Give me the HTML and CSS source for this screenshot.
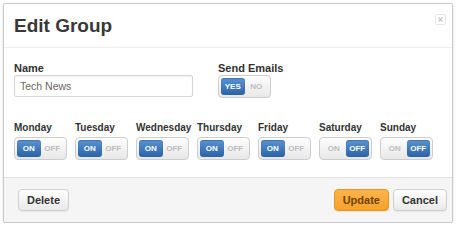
FILE: index.html
```html
<!DOCTYPE html>
<html lang="en">
<head>
  <meta charset="UTF-8">
  <title>Edit Group</title>
  <link rel="stylesheet" href="styles.css">
</head>
<body>
  <div class="modal">
    <div class="modal-header">
      <h2>Edit Group</h2>
      <span class="close">
        <svg width="11" height="11" viewBox="0 0 11 11">
          <rect x="0.5" y="0.5" width="10" height="10" rx="1.5" fill="none" stroke="#e6e6e6"/>
          <path d="M3.5 3.5 L7.5 7.5 M7.5 3.5 L3.5 7.5" stroke="#c4c4c4" stroke-width="1.2"/>
        </svg>
      </span>
    </div>

    <div class="modal-body">
      <div class="top-row">
        <div class="field name-field">
          <label>Name</label>
          <input type="text" class="text-input" value="Tech News">
        </div>
        <div class="field">
          <label>Send Emails</label>
          <div class="switch"><span class="active">YES</span><span>NO</span></div>
        </div>
      </div>

      <div class="days">
        <div class="day">
          <label>Monday</label>
          <div class="switch"><span class="active">ON</span><span>OFF</span></div>
        </div>
        <div class="day">
          <label>Tuesday</label>
          <div class="switch"><span class="active">ON</span><span>OFF</span></div>
        </div>
        <div class="day">
          <label>Wednesday</label>
          <div class="switch"><span class="active">ON</span><span>OFF</span></div>
        </div>
        <div class="day">
          <label>Thursday</label>
          <div class="switch"><span class="active">ON</span><span>OFF</span></div>
        </div>
        <div class="day">
          <label>Friday</label>
          <div class="switch"><span class="active">ON</span><span>OFF</span></div>
        </div>
        <div class="day">
          <label>Saturday</label>
          <div class="switch"><span>ON</span><span class="active">OFF</span></div>
        </div>
        <div class="day">
          <label>Sunday</label>
          <div class="switch"><span>ON</span><span class="active">OFF</span></div>
        </div>
      </div>
    </div>

    <div class="modal-footer">
      <button class="btn">Delete</button>
      <div class="actions">
        <button class="btn btn-warning">Update</button>
        <button class="btn">Cancel</button>
      </div>
    </div>
  </div>
</body>
</html>
```

FILE: styles.css
```css
* {
  box-sizing: border-box;
  margin: 0;
  padding: 0;
}
body {
  font-family: "Liberation Sans", Arial, sans-serif;
  background-color: #fff;
  color: #333;
  padding: 3px 0 0 3px;
}
/* Modal box */
.modal {
  width: 450px;
  height: 220px;
  border: 1px solid #c9c9c9;
  border-radius: 2px;
  box-shadow: 0 1px 3px rgba(0, 0, 0, 0.15);
  display: flex;
  flex-direction: column;
  overflow: hidden;
}
.modal-header {
  height: 44px;
  display: flex;
  justify-content: space-between;
  align-items: center;
  padding: 0 6px 0 10px;
  border-bottom: 1px solid #eee;
}
.modal-header h2 {
  font-size: 19px;
  font-weight: bold;
  color: #383838;
}
.close {
  align-self: flex-start;
  margin-top: 10px;
  display: flex;
}
/* Body */
.modal-body {
  flex: 1;
  padding: 14px 10px 0 10px;
}
.top-row {
  display: flex;
}
.name-field {
  width: 204px;
}
label {
  display: block;
  font-size: 11px;
  font-weight: bold;
  line-height: 13px;
  color: #333;
}
.text-input {
  width: 179px;
  height: 22px;
  border: 1px solid #d6d6d6;
  border-radius: 2px;
  padding: 0 5px;
  font-family: inherit;
  font-size: 10.5px;
  color: #666;
  box-shadow: inset 0 1px 2px rgba(0, 0, 0, 0.06);
}
.days {
  display: flex;
  margin-top: 24px;
}
.day {
  width: 61px;
}
.day label {
  font-size: 10px;
  line-height: 12px;
  margin-bottom: 3px;
}
/* On/off switch */
.switch {
  width: 53px;
  height: 23px;
  padding: 2px;
  border: 1px solid #cdcdcd;
  border-radius: 4px;
  background: linear-gradient(#fdfdfd, #e8e8e8);
  display: flex;
}
.switch span {
  flex: 1;
  display: flex;
  align-items: center;
  justify-content: center;
  font-size: 8px;
  font-weight: bold;
  color: #bdbdbd;
}
.switch span.active {
  color: #fff;
  border-radius: 3px;
  background: linear-gradient(#5a94d4, #2b62a6);
  box-shadow: inset 0 1px 1px rgba(0, 0, 0, 0.2);
}
/* Footer */
.modal-footer {
  height: 45px;
  background-color: #f5f5f5;
  border-top: 1px solid #e3e3e3;
  display: flex;
  justify-content: space-between;
  align-items: center;
  padding: 0 5px 0 14px;
}
.actions {
  display: flex;
  gap: 4px;
}
.btn {
  height: 22px;
  padding: 0 8px;
  border: 1px solid #d0d0d0;
  border-radius: 4px;
  background: linear-gradient(#fff, #e9e9e9);
  font-family: inherit;
  font-size: 11px;
  font-weight: bold;
  color: #333;
  box-shadow: 0 1px 1px rgba(0, 0, 0, 0.06);
}
.btn-warning {
  border-color: #e8951c;
  background: linear-gradient(#fbb44c, #f6a12a);
  color: #6e4200;
}
```
